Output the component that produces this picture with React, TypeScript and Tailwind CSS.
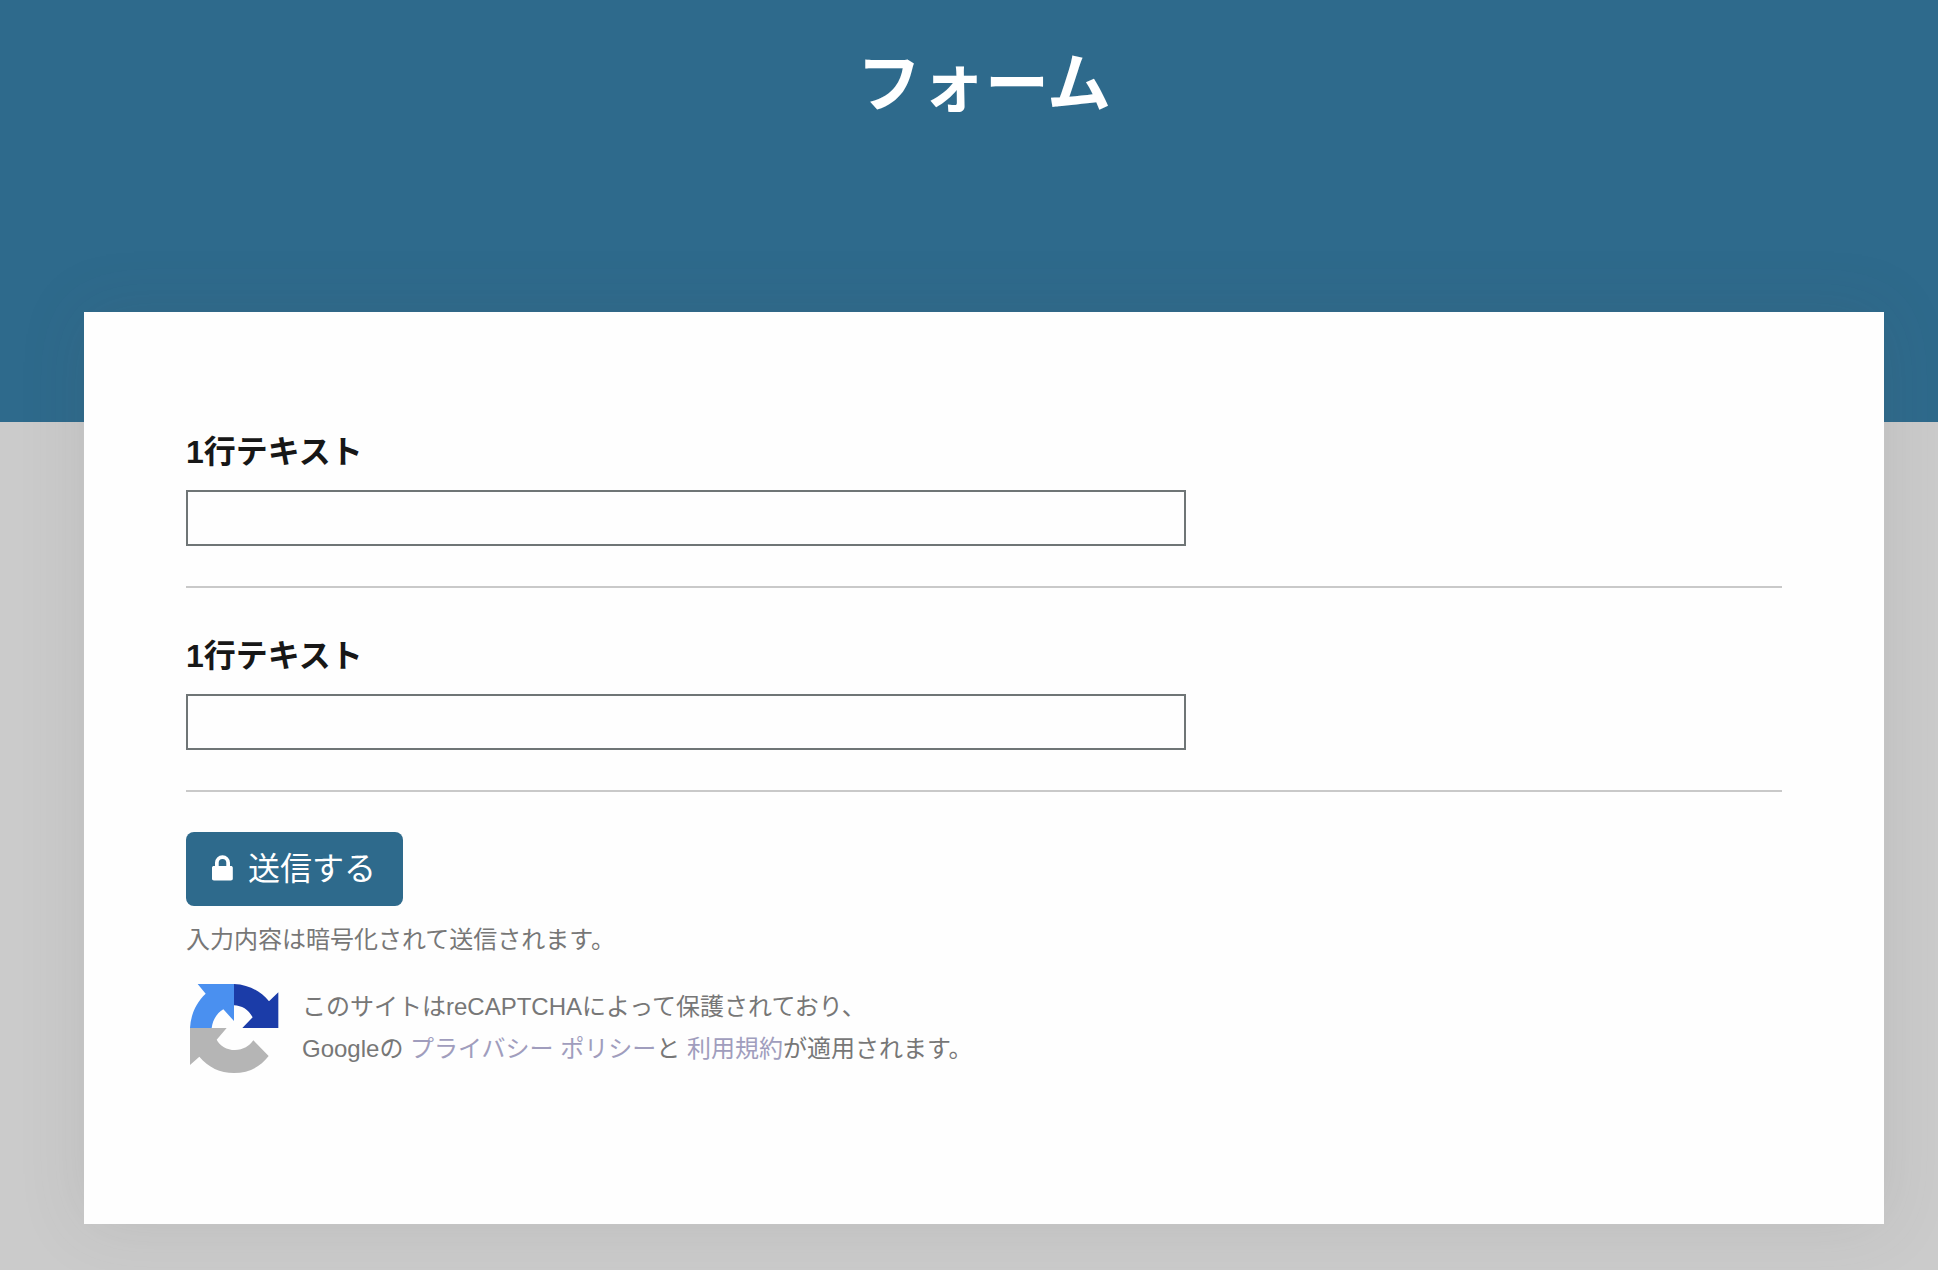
const fields = [
  { id: "text-1", label: "1行テキスト" },
  { id: "text-2", label: "1行テキスト" },
];

function LockIcon() {
  return (
    <svg viewBox="0 0 22 28" className="h-7 w-[22px]" aria-hidden="true">
      <path
        fill="currentColor"
        fillRule="evenodd"
        d="M3 11V7.8a7.500 7.500 0 0 1 15 0V11h.900c1.100 0 1.900.700 1.900 1.700v11c0 1-.800 1.700-1.900 1.700H1.900c-1.100 0-1.900-.700-1.900-1.700v-11c0-1 .800-1.700 1.900-1.700H3Zm3.700 0h7.600V7.800a3.800 3.800 0 0 0-7.600 0V11Z"
      />
    </svg>
  );
}

function RecaptchaLogo() {
  return (
    <svg viewBox="48 30 288 288" className="size-24 shrink-0" role="img" aria-label="reCAPTCHA">
      <path fill="#4a90f0" d="M83 42H192V153L160 118C140 130 128 150 125 174H60C62 135 78 98 107 71Z" />
      <path fill="#1b3ca8" d="M192 42C238 44 272 64 297 94L325 67V174H217L248 142C235 118 215 107 192 106Z" />
      <path
        fill="#b5b5b5"
        d="M60 174H170L140 209C150 228 170 240 195 240C220 240 238 228 250 211L296 258C270 292 235 309 192 309C150 309 115 292 88 260L60 285Z"
      />
    </svg>
  );
}

export default function App() {
  return (
    <div className="min-h-screen bg-[#cbcbcb] pb-[46px] font-['Liberation_Sans','Noto_Sans_CJK_JP',sans-serif] text-[#171717]">
      <header className="bg-[#2e6a8c] pt-9 pr-[54px] pb-[290px] pl-[84px]">
        <h1 className="text-center text-[64px] leading-[96px] font-bold text-white">フォーム</h1>
      </header>

      <main className="relative -mt-[110px] mr-[54px] ml-[84px] bg-[#fefefe] px-[102px] pt-[120px] pb-[148px] shadow-[0_0_64px_rgba(80,80,80,0.12)]">
        <form onSubmit={(e) => e.preventDefault()}>
          <div className="flex flex-col gap-12">
            {fields.map((field) => (
              <div key={field.id} className="border-b-2 border-[#c9c9c9] pb-10">
                <label htmlFor={field.id} className="block text-[32px] leading-10 font-bold">
                  {field.label}
                </label>
                <input
                  id={field.id}
                  type="text"
                  className="mt-[18px] block h-14 w-full max-w-[1000px] border-2 border-[#6f7576] bg-[#fefefe] px-3 text-2xl"
                />
              </div>
            ))}
          </div>

          <button
            type="submit"
            className="mt-10 flex h-[74px] items-center gap-3.5 rounded-lg bg-[#2e6a8c] pr-[27px] pl-[26px] text-[32px] leading-10 text-white"
          >
            <LockIcon />
            送信する
          </button>
          <p className="mt-3.5 text-2xl leading-10 text-[#777]">入力内容は暗号化されて送信されます。</p>
        </form>

        <div className="mt-5 flex items-center gap-5">
          <RecaptchaLogo />
          <p className="text-2xl leading-[42px] text-[#777]">
            このサイトはreCAPTCHAによって保護されており、
            <br />
            Googleの{" "}
            <a href="#privacy" className="text-[#a09dbd]">
              プライバシー ポリシー
            </a>
            と{" "}
            <a href="#terms" className="text-[#a09dbd]">
              利用規約
            </a>
            が適用されます。
          </p>
        </div>
      </main>
    </div>
  );
}
